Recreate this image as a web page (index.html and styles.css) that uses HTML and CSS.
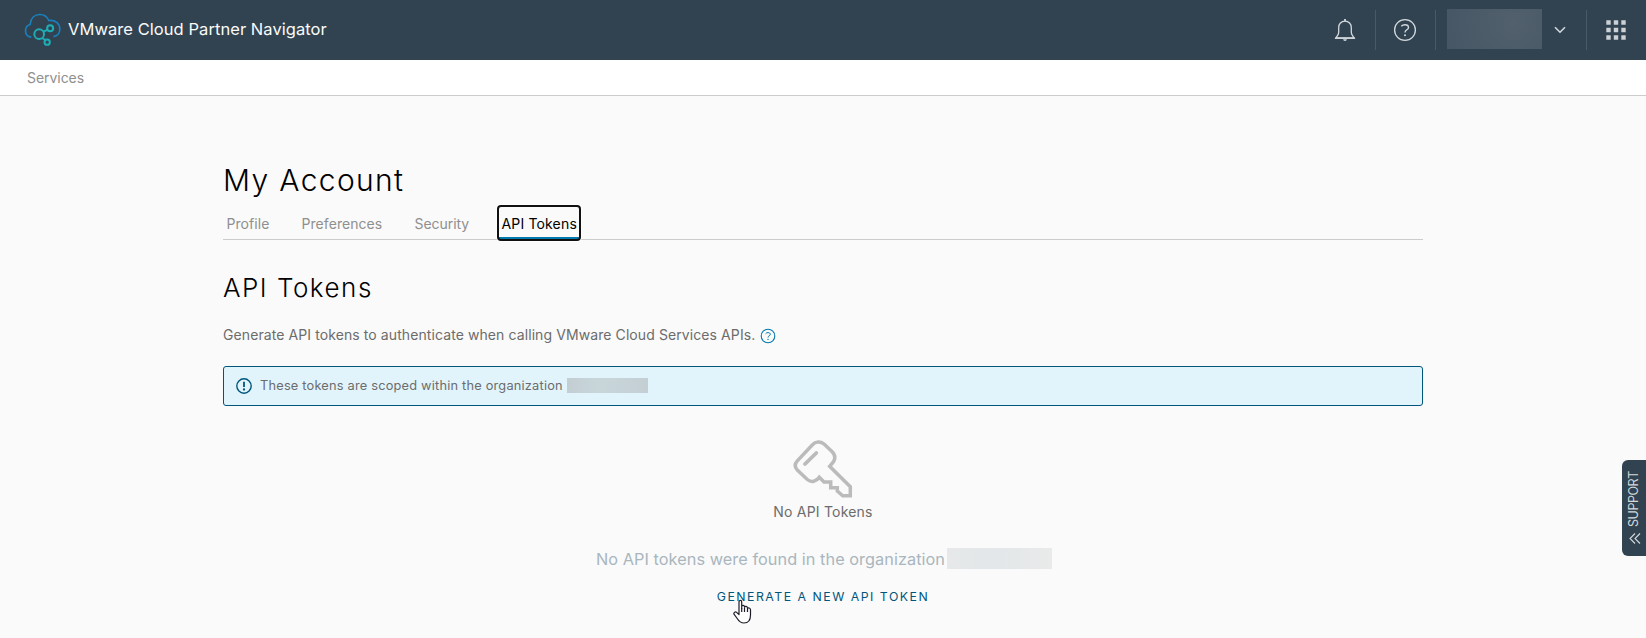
FILE: index.html
```html
<!DOCTYPE html>
<html lang="en">
<head>
<meta charset="utf-8">
<title>VMware Cloud Partner Navigator</title>
<link rel="stylesheet" href="styles.css">
</head>
<body>
<header class="header">
  <svg class="logo" width="38" height="34" viewBox="0 0 114 102" fill="none" stroke-width="5">
    <path d="M22 71.500C11 72.500 4.500 64 4.500 53.500C4.500 43 11 36.500 18.500 34.500C20 15 32 4.500 48 4.500C60 4.500 69.500 11.500 74.500 22.500C94 20 107.500 32 107.500 49C107.500 60 100 69.500 88.500 71" stroke="#1b7fba"/>
    <g stroke="#1fadb5" stroke-width="6"><circle cx="45.500" cy="63.500" r="14.500"/><circle cx="78.500" cy="46" r="9"/><circle cx="69.500" cy="87.500" r="8"/><path d="M58 56.500l12.500-6.500M54 75l10.500 6"/></g>
  </svg>
  <span class="product">VMware Cloud Partner Navigator</span>
  <div class="actions">
    <button class="action bell" aria-label="Notifications">
      <svg width="22" height="24" viewBox="0 0 22 24" fill="none" stroke="#d3d9dd" stroke-width="1.300"><path d="M11 3.200C7.200 3.200 4.700 6 4.700 9.500V14.500C4.700 16.800 3 18 1.800 20H20.200C19 18 17.300 16.800 17.300 14.500V9.500C17.300 6 14.800 3.200 11 3.200Z"/><path d="M1 20.200H21"/><path d="M11 1v2.200" stroke-width="1.800"/><path d="M9.200 21.300h3.600c0 1-.7 1.700-1.800 1.700s-1.800-.7-1.800-1.700z" fill="#d3d9dd" stroke="none"/></svg>
    </button>
    <button class="action help" aria-label="Help">
      <svg width="24" height="24" viewBox="0 0 24 24" fill="none" stroke="#d3d9dd" stroke-width="1.300"><circle cx="12" cy="12" r="10.400"/><path d="M8.300 8.300C9.200 7.200 10.500 6.700 12 6.700C14 6.700 15.500 7.700 15.500 9.400C15.500 12 12 11.600 12 14.600" stroke-width="1.400"/><circle cx="12" cy="17.300" r="1" fill="#d3d9dd" stroke="none"/></svg>
    </button>
    <button class="action user" aria-label="Account">
      <span class="user-name"></span>
      <svg width="12" height="8" viewBox="0 0 12 8" fill="none" stroke="#d3d9dd" stroke-width="1.600"><path d="M1 1.200l5 5 5-5"/></svg>
    </button>
    <button class="action apps" aria-label="Apps">
      <svg width="20" height="20" viewBox="0 0 20 20" fill="#cbd1d5"><path d="M.3 .3h4.400v4.400H.3zM7.800 .3h4.400v4.400h-4.400zM15.300 .3h4.400v4.400h-4.400zM.3 7.800h4.400v4.400H.3zM7.800 7.800h4.400v4.400h-4.400zM15.300 7.800h4.400v4.400h-4.400zM.3 15.300h4.400v4.400H.3zM7.800 15.300h4.400v4.400h-4.400zM15.300 15.300h4.400v4.400h-4.400z"/></svg>
    </button>
  </div>
</header>
<nav class="subnav"><a>Services</a></nav>
<main class="content">
  <h1>My Account</h1>
  <div class="tabs">
    <a class="tab profile">Profile</a>
    <a class="tab preferences">Preferences</a>
    <a class="tab security">Security</a>
    <a class="tab active">API Tokens</a>
  </div>
  <h2>API Tokens</h2>
  <p class="intro"><span>Generate API tokens to authenticate when calling VMware Cloud Services APIs.</span>
    <svg width="16" height="16" viewBox="0 0 16 16" fill="none" stroke="#0079ad"><circle cx="8" cy="8" r="6.800" stroke-width="1.100"/><path d="M5.600 5.800C6.100 5 6.900 4.600 8 4.600C9.300 4.600 10.300 5.200 10.300 6.300C10.300 7.900 8 7.700 8 9.600"/><circle cx="8" cy="11.400" r=".7" fill="#0079ad" stroke="none"/></svg>
  </p>
  <div class="alert">
    <svg width="16" height="16" viewBox="0 0 16 16" fill="none" stroke="#00567a"><circle cx="8" cy="8" r="7.200" stroke-width="1.400"/><path d="M8 3.700v5.300" stroke-width="1.800"/><circle cx="8" cy="11.500" r="1.150" fill="#00567a" stroke="none"/></svg>
    <span class="alert-text">These tokens are scoped within the organization</span>
    <span class="alert-org"></span>
  </div>
  <section class="empty">
    <svg class="key" width="60" height="60" viewBox="0 0 60 60" fill="none" stroke="#bbb" stroke-width="3.500"><path d="M4.300 20.900L19.500 4.700C22.500 1.400 27.500 1.200 31 4L38.700 11.200C42 14.500 42.500 18.500 40.500 21.700L36.700 26.300L57.300 46.800V55.700H49.700L44.300 51V47.700H37.700V42H31L26.300 37.300C23.500 41.500 18.500 43 14.300 39.500L4.300 30C1.500 27 1.500 24 4.300 20.900Z"/><path d="M12 24L23.300 13" stroke-width="3.800" stroke-linecap="round"/></svg>
    <div class="empty-title">No API Tokens</div>
    <div class="empty-message"><span class="message-text">No API tokens were found in the organization</span><span class="message-org"></span></div>
    <a class="generate">GENERATE A NEW API TOKEN</a>
  </section>
</main>
<aside class="support"><span class="support-label">SUPPORT</span>
  <svg width="12" height="11" viewBox="0 0 12 11" fill="none" stroke="#d3d9dd" stroke-width="1.100"><path d="M6 .5l-5 5 5 5M11 .5l-5 5 5 5"/></svg>
</aside>
<svg class="cursor" width="20" height="26" viewBox="0 0 20 26" fill="#fff" stroke="#1c1c28" stroke-width="1.200" stroke-linejoin="round"><path d="M6 15.500V3C6 .9 8.700.9 8.700 3V9.500V7.500C8.900 6 11.300 6.100 11.500 7.800V8.300C12 6.900 14.300 7.200 14.500 8.900V9.500C15.200 8.300 17.500 8.800 17.500 10.800V16C17.500 21 15 24 11 24C7.500 24 6 22.500 4.200 19.500L1 15.200C.3 13.800 2.200 12.300 3.600 13.400Z"/><path d="M8.700 9v4M11.500 9v4M14.500 9.500v3.500" fill="none"/></svg>
</body>
</html>
```
FILE: styles.css
```css
* { box-sizing: border-box; }
body {
  margin: 0;
  height: 638px;
  overflow: hidden;
  position: relative;
  background: #fafafa;
  color: #6c6c6c;
  font: 400 14px/24px Inter, sans-serif;
}
h1, h2, p { margin: 0; }
svg { display: block; flex: none; }

.header { display: flex; align-items: center; height: 60px; padding-left: 23.500px; background: #314351; }
.logo { margin-right: 6.500px; }
.product { padding-bottom: 2px; color: #fafafa; font-size: 16.5px; letter-spacing: .06px; }
.actions { display: flex; margin-left: auto; }
.action {
  display: flex; align-items: center; justify-content: center;
  height: 40px; padding: 0; border: 0; border-left: 1px solid #495a67; background: none;
}
.bell { width: 60px; border-left: 0; }
.help { width: 60px; padding-right: 2px; }
.user { width: 151px; justify-content: flex-start; padding-left: 11px; }
.user-name { width: 95px; height: 40px; margin: -2px 12px 0 0; background: radial-gradient(circle at 70% 35%, #52606d, #465664); }
.apps { width: 60px; justify-content: flex-start; padding-left: 19px; }

.subnav { height: 36px; padding: 6px 27px 0; border-bottom: 1px solid #ccc; background: #fff; color: #8f8f8f; letter-spacing: -.05px; }

.content { width: 1200px; margin: 0 auto; padding-top: 64px; }
h1 { color: #000; font-size: 30px; line-height: 40px; font-weight: 300; letter-spacing: 1.35px; }
.tabs { display: flex; align-items: flex-start; height: 35px; margin-top: 5px; border-bottom: 1px solid #ccc; }
.tab { padding: 7px 0 0 3.5px; color: #8f8f8f; letter-spacing: .06px; white-space: nowrap; }
.profile { width: 75px; }
.preferences { width: 113px; }
.security { width: 86px; letter-spacing: -.04px; }
.active {
  width: 84px; height: 36px; padding: 5px 0 0 2.500px;
  border: 2px solid #111; border-radius: 4px;
  background: linear-gradient(#0079ad, #0079ad) bottom / 100% 2px no-repeat #fafafa;
  box-shadow: 0 0 0 1px #fff;
  color: #000; letter-spacing: .16px;
}
h2 { margin-top: 32px; color: #000; font-size: 26px; line-height: 32px; font-weight: 300; letter-spacing: 1.5px; }
.intro { display: flex; align-items: center; margin-top: 19px; letter-spacing: .09px; }
.intro span { width: 537px; white-space: nowrap; }
.intro svg { margin-top: 2px; }

.alert {
  display: flex; align-items: center; height: 40px; margin-top: 19px; padding-left: 12px;
  border: 1px solid #00567a; border-radius: 3px; background: #e1f4fc; font-size: 12.8px;
}
.alert-text { margin-left: 8px; letter-spacing: .2px; width: 307px; white-space: nowrap; }
.alert-org { width: 81px; height: 15px; margin-bottom: 1px; background: linear-gradient(90deg, #c3ced3, #c8d6da 40%, #c4cfd4); }

.empty { display: flex; flex-direction: column; align-items: center; padding-top: 34px; }
.empty-title { letter-spacing: .2px; }
.empty-message { display: flex; align-items: center; margin: 23px 0 0 2px; color: #a9b6be; font-size: 16.3px; }
.message-text { width: 351px; letter-spacing: .05px; white-space: nowrap; }
.message-org { width: 105px; height: 21px; margin-bottom: 2px; background: linear-gradient(90deg, #e6e8e9, #e3e7e9 50%, #e9eaea); }
.generate { margin-top: 14px; color: #00567a; font-size: 12.3px; letter-spacing: 1.5px; }

.support {
  position: absolute; right: 0; top: 460px; width: 24px; height: 96px;
  display: flex; flex-direction: column; align-items: center; gap: 6px; padding-top: 12px;
  border-radius: 6px 0 0 6px; background: #314351; color: #d3d9dd;
}
.support-label { height: 55px; writing-mode: vertical-rl; transform: rotate(180deg); font-size: 12.5px; letter-spacing: -.45px; }
.support svg { margin-left: 2px; }
.cursor { position: absolute; left: 733px; top: 599px; }
```
